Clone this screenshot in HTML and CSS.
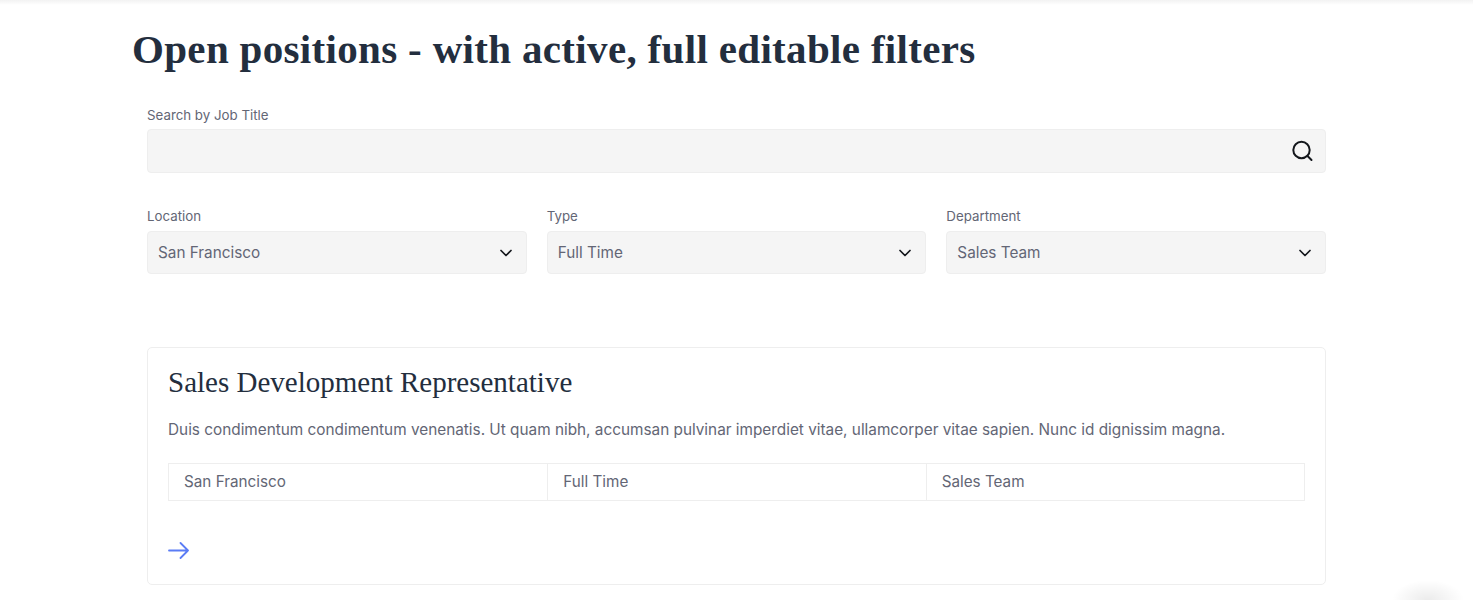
FILE: index.html
```html
<!DOCTYPE html>
<html lang="en">
<head>
<meta charset="UTF-8">
<meta name="viewport" content="width=device-width, initial-scale=1.0">
<title>Open positions</title>
<link rel="stylesheet" href="styles.css">
</head>
<body>
<div class="top-shadow"></div>
<div class="page">
    <h1>Open positions - with active, full editable filters</h1>

    <div class="filters">
        <div class="field">
            <label class="field-label">Search by Job Title</label>
            <div class="control search-control">
                <svg width="24" height="24" viewBox="0 0 24 24" fill="none" stroke="#14171c" stroke-width="2" stroke-linecap="round">
                    <circle cx="11.5" cy="11" r="8.2"/>
                    <path d="M17.5 17l4 4"/>
                </svg>
            </div>
        </div>

        <div class="select-row">
            <div class="field">
                <label class="field-label">Location</label>
                <div class="control select-control">
                    <span>San Francisco</span>
                    <svg class="chevron" width="12" height="8" viewBox="0 0 12 8" fill="none" stroke="#14171c" stroke-width="1.7" stroke-linecap="round" stroke-linejoin="round"><path d="M1 1.5l5 5 5-5"/></svg>
                </div>
            </div>
            <div class="field">
                <label class="field-label">Type</label>
                <div class="control select-control">
                    <span>Full Time</span>
                    <svg class="chevron" width="12" height="8" viewBox="0 0 12 8" fill="none" stroke="#14171c" stroke-width="1.7" stroke-linecap="round" stroke-linejoin="round"><path d="M1 1.5l5 5 5-5"/></svg>
                </div>
            </div>
            <div class="field">
                <label class="field-label">Department</label>
                <div class="control select-control">
                    <span>Sales Team</span>
                    <svg class="chevron" width="12" height="8" viewBox="0 0 12 8" fill="none" stroke="#14171c" stroke-width="1.7" stroke-linecap="round" stroke-linejoin="round"><path d="M1 1.5l5 5 5-5"/></svg>
                </div>
            </div>
        </div>
    </div>

    <div class="job-card">
        <h2>Sales Development Representative</h2>
        <p>Duis condimentum condimentum venenatis. Ut quam nibh, accumsan pulvinar imperdiet vitae, ullamcorper vitae sapien. Nunc id dignissim magna.</p>
        <div class="job-meta">
            <div>San Francisco</div>
            <div>Full Time</div>
            <div>Sales Team</div>
        </div>
        <a class="job-link" href="#">
            <svg width="21" height="17" viewBox="0 0 21 17" fill="none" stroke="#5b7cf5" stroke-width="1.8" stroke-linecap="round" stroke-linejoin="round"><path d="M1 8.5h19M12.5 1l7.5 7.5-7.5 7.5"/></svg>
        </a>
    </div>
</div>
<div class="chat-shadow"></div>
</body>
</html>
```

FILE: styles.css
```css
html, body {
    height: 600px;
    overflow: hidden;
}

body {
    margin: 0;
    background: #fff;
    font-family: 'Inter', 'Open Sans', sans-serif;
    color: #636675;
    position: relative;
}

.top-shadow {
    position: absolute;
    top: 0;
    left: 0;
    right: 0;
    height: 5px;
    background: linear-gradient(rgba(0, 0, 0, 0.05), rgba(0, 0, 0, 0));
}

.page {
    margin-left: 132px;
    width: 1208px;
}

h1 {
    margin: 0;
    padding-top: 26px;
    height: 57px;
    font-family: 'Liberation Serif', serif;
    font-size: 41px;
    line-height: 46px;
    letter-spacing: 0.33px;
    font-weight: 700;
    color: #232e3e;
}

.filters {
    width: 1179px;
    margin: 24px 0 0 15px;
}

.field-label {
    display: block;
    font-size: 13.3px;
    line-height: 17px;
    margin-bottom: 6px;
}

.field-label + .search-control {
    margin-top: -1px;
}

.control {
    display: flex;
    align-items: center;
    box-sizing: border-box;
    background: #f5f5f5;
    border: 1px solid #eeeeee;
    border-radius: 4px;
}

.search-control {
    height: 44px;
    justify-content: flex-end;
    padding-right: 11px;
}

.select-row {
    display: grid;
    grid-template-columns: repeat(3, 1fr);
    gap: 20px;
    margin-top: 35px;
}

.select-control {
    height: 43px;
    justify-content: space-between;
    padding: 0 14px 0 10px;
    font-size: 15.3px;
}

.job-card {
    width: 1179px;
    height: 238px;
    box-sizing: border-box;
    margin: 73px 0 0 15px;
    padding: 20px;
    border: 1px solid #eeeeee;
    border-radius: 5px;
}

h2 {
    margin: 0;
    font-family: 'Liberation Serif', serif;
    font-size: 29px;
    line-height: 28px;
    font-weight: 400;
    color: #232e3e;
}

.job-card p {
    margin: 22px 0 0;
    font-size: 15.34px;
    line-height: 24px;
}

.job-meta {
    display: grid;
    grid-template-columns: repeat(3, 1fr);
    margin-top: 21px;
    border: 1px solid #eeeeee;
    font-size: 15.25px;
    line-height: 36px;
}

.job-meta div {
    padding-left: 15px;
}

.job-meta div + div {
    border-left: 1px solid #eeeeee;
}

.job-link {
    display: block;
    width: 21px;
    height: 17px;
    margin-top: 41px;
}

.chat-shadow {
    position: absolute;
    right: 0;
    bottom: 0;
    width: 90px;
    height: 20px;
    background: radial-gradient(ellipse 36px 20px at 45px 100%, rgba(0, 0, 0, 0.08), rgba(0, 0, 0, 0));
}
```
